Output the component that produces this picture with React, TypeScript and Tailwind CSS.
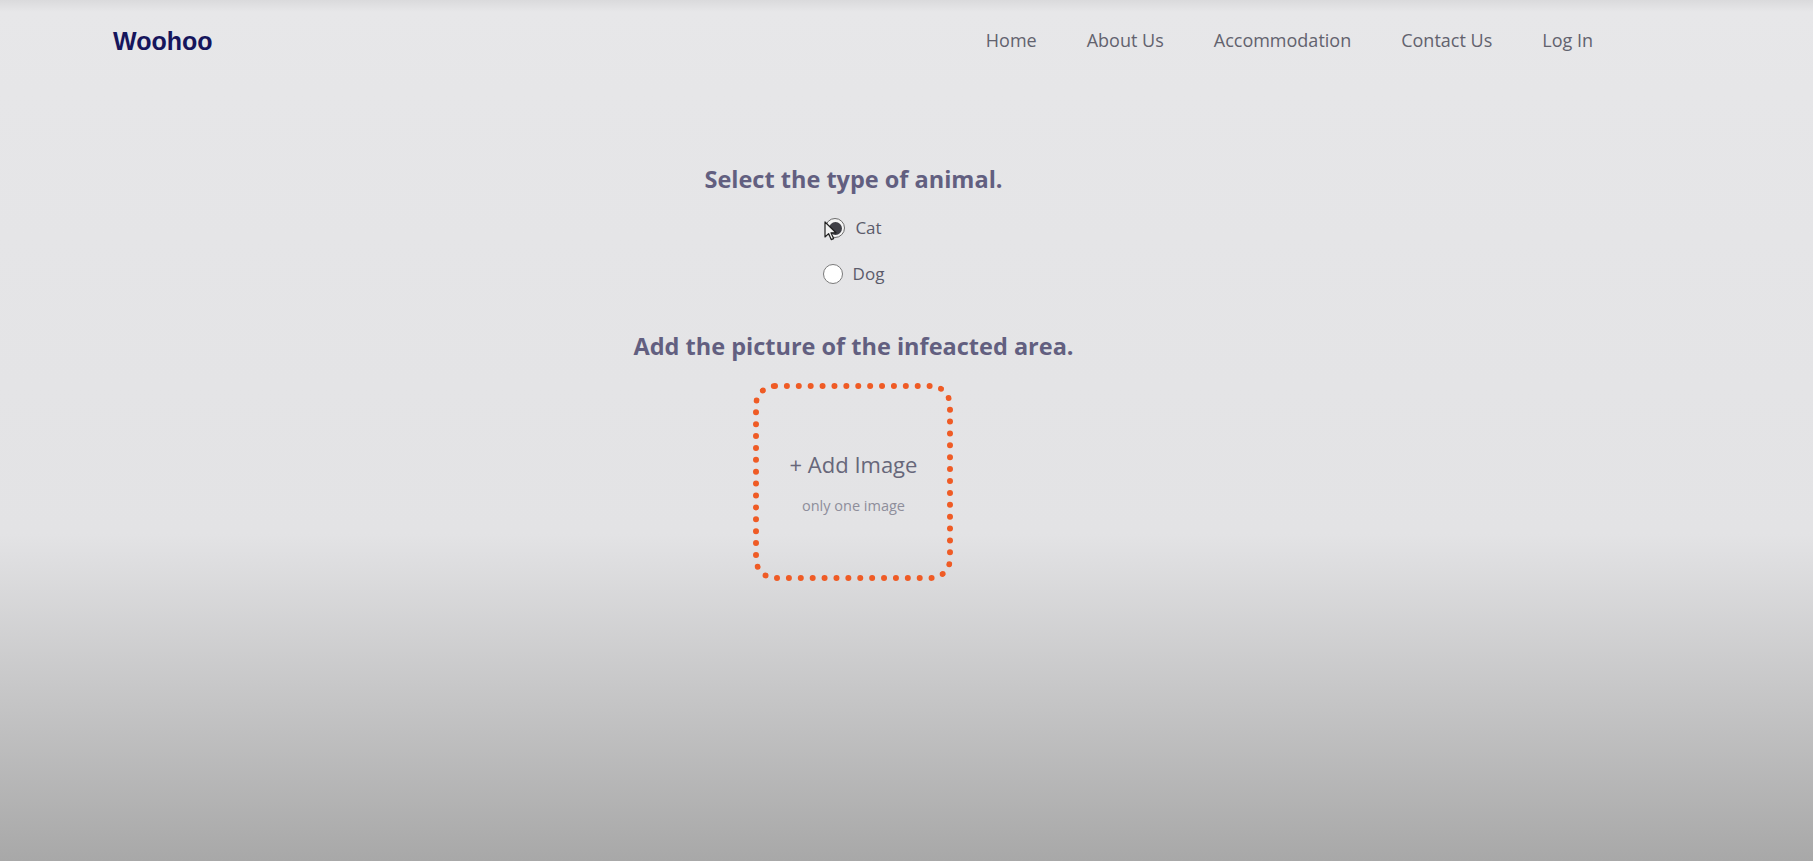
import React, { useState } from 'react';

const navLinks = ['Home', 'About Us', 'Accommodation', 'Contact Us', 'Log In'];

const Radio: React.FC<{ checked: boolean; label: string; onClick: () => void; cursor?: boolean }> = ({ checked, label, onClick, cursor }) => (
  <button type="button" onClick={onClick} className="relative flex h-6 items-center gap-[10px]">
    <span
      className={
        checked
          ? 'flex h-[20px] w-[20px] items-center justify-center rounded-full border-[1.5px] border-[#6b6b6b] bg-[#f4f4f4]'
          : 'flex h-[20px] w-[20px] items-center justify-center rounded-full border-[1.5px] border-[#7a7a7a] bg-white'
      }
    >
      {checked && <span className="h-[13px] w-[13px] rounded-full bg-[#3f3f46]" />}
    </span>
    <span className="text-[17px] text-[#5b5b6b]">{label}</span>
    {cursor && (
      <svg className="absolute left-[-1px] top-[5px] h-[20px] w-[14px]" viewBox="0 0 14 20">
        <path d="M1 1 L1 16 L4.6 12.6 L7.2 18.6 L9.6 17.6 L7 11.8 L12 11.8 Z" fill="#f2f2f2" stroke="#1f1f1f" strokeWidth="1.2" strokeLinejoin="round" />
      </svg>
    )}
  </button>
);

const App: React.FC = () => {
  const [animal, setAnimal] = useState<'cat' | 'dog'>('cat');

  return (
    <div
      className="min-h-[861px] w-full bg-[linear-gradient(to_bottom,#dadadc_0px,#e7e7e9_12px,#e6e6e8_90px,#e3e3e5_62%,#a8a8a8_100%)]"
      style={{ fontFamily: '"Open Sans", "Noto Sans", sans-serif' }}
    >
      <header className="flex h-[80px] items-center justify-between pl-[113px] pr-[220px]">
        <div className="pt-[4px] text-[25px] font-bold text-[#15155c]" style={{ fontFamily: '"Liberation Sans", Arial, sans-serif' }}>
          Woohoo
        </div>
        <nav className="flex items-center gap-[50px]">
          {navLinks.map((link) => (
            <a key={link} href="#" className="text-[18px] text-[#62626e]">
              {link}
            </a>
          ))}
        </nav>
      </header>

      <main className="flex justify-center pr-[106px] pt-[83px]">
        <div className="flex flex-col items-center">
          <h2 className="h-8 text-[23.5px] font-bold leading-8 text-[#625f80]">Select the type of animal.</h2>
          <div className="mt-[21px] flex flex-col items-center gap-[22px]">
            <Radio checked={animal === 'cat'} label="Cat" onClick={() => setAnimal('cat')} cursor />
            <Radio checked={animal === 'dog'} label="Dog" onClick={() => setAnimal('dog')} />
          </div>
          <h2 className="mt-[44px] h-8 text-[23.5px] font-bold leading-8 text-[#625f80]">Add the picture of the infeacted area.</h2>
          <label className="mt-[21px] flex h-[198px] w-[200px] cursor-pointer flex-col items-center justify-center rounded-[22px] border-[6px] border-dotted border-[#ef5b25]">
            <span className="text-[22px] leading-8 text-[#67677a]">+ Add Image</span>
            <span className="mt-[15px] text-[14.5px] text-[#8e8e9b]">only one image</span>
          </label>
        </div>
      </main>
    </div>
  );
};

export default App;
